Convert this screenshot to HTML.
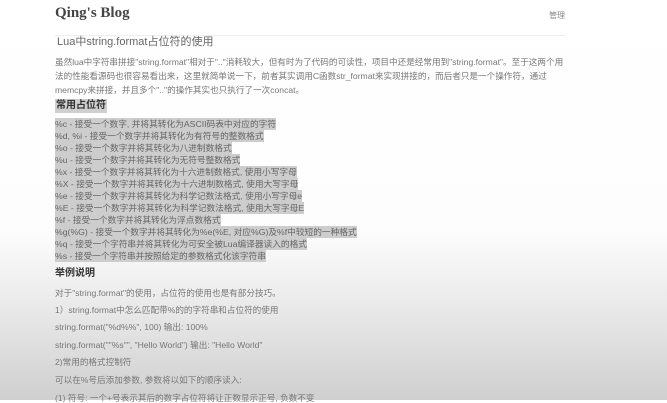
<!DOCTYPE html>
<html><head><meta charset="utf-8"><style>
html,body{margin:0;padding:0}
body{width:667px;height:400px;overflow:hidden;position:relative;
background:linear-gradient(to bottom,#fff 0px,#fdfdfd 230px,#e6e6e6 320px,#cfcfcf 400px);
font-family:"Liberation Sans","Noto Sans CJK SC",sans-serif;color:#666}
.a{position:absolute;white-space:nowrap}
.logo{left:55px;top:5px;font-family:"Liberation Serif","Noto Serif CJK SC",serif;font-weight:bold;font-size:15px;color:#444}
.mg{left:549px;top:10px;font-size:8px;color:#888}
.hr{left:55px;top:35px;width:510px;height:1px;background:#eee}
.title{left:57px;top:35px;font-size:11px;color:#666;line-height:14px}
.p{left:55px;font-size:8.6px;line-height:10px;color:#777}
.h{left:55px;font-size:10px;font-weight:bold;color:#333;background:#cfcfcf;padding:1px 1px;line-height:12px}
.h2{left:55px;font-size:10px;font-weight:bold;color:#333;line-height:12px}
.li{left:55px;top:118px;font-size:8.7px;line-height:12px;color:#666}
.li span{background:#cdcdcd;display:inline-block}
</style></head><body>
<div class="a logo">Qing's Blog</div>
<div class="a mg">管理</div>
<div class="a hr"></div>
<div class="a title">Lua中string.format占位符的使用</div>
<div class="a p" style="top:57px">虽然lua中字符串拼接"string.format"相对于".."消耗较大，但有时为了代码的可读性，项目中还是经常用到"string.format"。至于这两个用</div>
<div class="a p" style="top:71px">法的性能看源码也很容易看出来，这里就简单说一下，前者其实调用C函数str_format来实现拼接的，而后者只是一个操作符，通过</div>
<div class="a p" style="top:85px">memcpy来拼接，并且多个".."的操作其实也只执行了一次concat。</div>
<div class="a h" style="top:99px">常用占位符</div>
<div class="a li">
<span>%c - 接受一个数字, 并将其转化为ASCII码表中对应的字符</span><br>
<span>%d, %i - 接受一个数字并将其转化为有符号的整数格式</span><br>
<span>%o - 接受一个数字并将其转化为八进制数格式</span><br>
<span>%u - 接受一个数字并将其转化为无符号整数格式</span><br>
<span>%x - 接受一个数字并将其转化为十六进制数格式, 使用小写字母</span><br>
<span>%X - 接受一个数字并将其转化为十六进制数格式, 使用大写字母</span><br>
<span>%e - 接受一个数字并将其转化为科学记数法格式, 使用小写字母e</span><br>
<span>%E - 接受一个数字并将其转化为科学记数法格式, 使用大写字母E</span><br>
<span>%f - 接受一个数字并将其转化为浮点数格式</span><br>
<span>%g(%G) - 接受一个数字并将其转化为%e(%E, 对应%G)及%f中较短的一种格式</span><br>
<span>%q - 接受一个字符串并将其转化为可安全被Lua编译器读入的格式</span><br>
<span>%s - 接受一个字符串并按照给定的参数格式化该字符串</span>
</div>
<div class="a h2" style="top:268px">举例说明</div>
<div class="a p" style="top:288px">对于"string.format"的使用，占位符的使用也是有部分技巧。</div>
<div class="a p" style="top:305px">1）string.format中怎么匹配带%的的字符串和占位符的使用</div>
<div class="a p" style="top:322px">string.format("%d%%", 100) 输出: 100%</div>
<div class="a p" style="top:340px">string.format(""%s"", "Hello World") 输出: "Hello World"</div>
<div class="a p" style="top:357px">2)常用的格式控制符</div>
<div class="a p" style="top:375px">可以在%号后添加参数, 参数将以如下的顺序读入:</div>
<div class="a p" style="top:393px">(1) 符号: 一个+号表示其后的数字占位符将让正数显示正号, 负数不变</div>
</body></html>
